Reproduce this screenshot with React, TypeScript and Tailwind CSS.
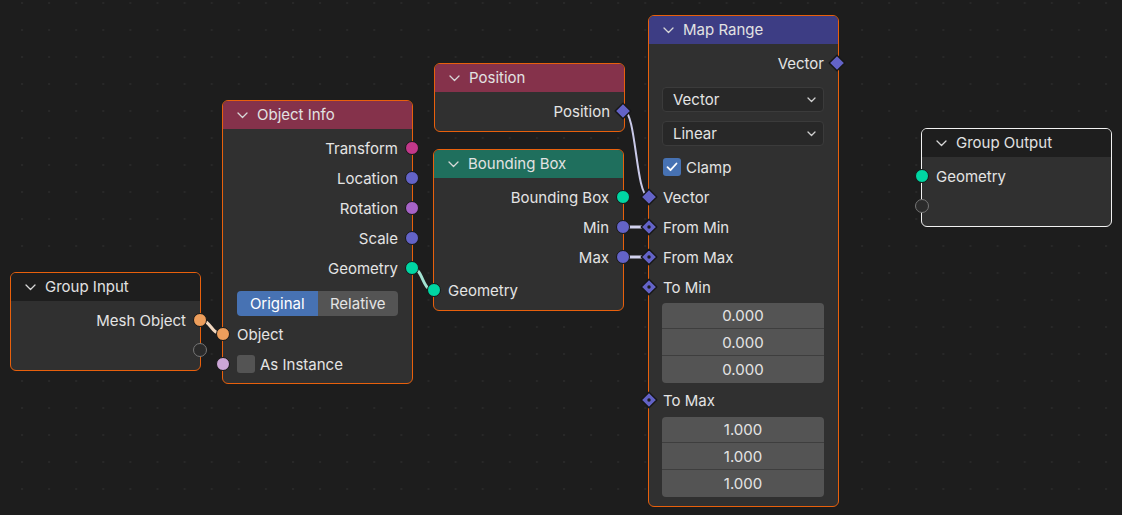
import React from "react";

type Kind = "circle" | "diamond" | "diamondDot" | "hollow";

function Socket({ side, kind, color }: { side: "left" | "right"; kind: Kind; color?: string }) {
  if (kind === "circle") {
    const pos = side === "left" ? "-left-[7.5px]" : "-right-[6.5px]";
    return (
      <span
        className={`absolute top-1/2 -translate-y-1/2 ${pos} w-[14px] h-[14px] rounded-full border-[1.5px] border-[#171717] ${color}`}
      />
    );
  }
  if (kind === "hollow") {
    const pos = side === "left" ? "-left-[7.5px]" : "-right-[6.5px]";
    return (
      <span
        className={`absolute top-1/2 -translate-y-1/2 ${pos} w-[14px] h-[14px] rounded-full border-[1.5px] border-[#767676] bg-[#2b2b2b]`}
      />
    );
  }
  const pos = side === "left" ? "-left-[9px]" : "-right-[8px]";
  return (
    <svg
      width="18"
      height="18"
      viewBox="0 0 18 18"
      className={`absolute top-1/2 -translate-y-1/2 ${pos}`}
    >
      <polygon points="9,1.2 16.8,9 9,16.8 1.2,9" fill="#6363c7" stroke="#171717" strokeWidth="1.4" strokeLinejoin="round" />
      {kind === "diamondDot" && <circle cx="9" cy="9" r="1.7" fill="#1c1c1c" />}
    </svg>
  );
}

function OutRow({ label, kind, color }: { label: string; kind: Kind; color?: string }) {
  return (
    <div className="relative h-[30px] flex items-center justify-end pr-[14px]">
      <span>{label}</span>
      <Socket side="right" kind={kind} color={color} />
    </div>
  );
}

function InRow({ label, kind, color, cls = "" }: { label?: string; kind: Kind; color?: string; cls?: string }) {
  return (
    <div className={`relative h-[30px] flex items-center pl-[14px] ${cls}`}>
      {label && <span>{label}</span>}
      <Socket side="left" kind={kind} color={color} />
    </div>
  );
}

function Chevron() {
  return (
    <svg width="11" height="7" viewBox="0 0 11 7" className="shrink-0">
      <path d="M1 1 L5.5 5.5 L10 1" fill="none" stroke="#d8d8d8" strokeWidth="1.3" strokeLinecap="round" strokeLinejoin="round" />
    </svg>
  );
}

function SmallChevron() {
  return (
    <svg width="9" height="6" viewBox="0 0 9 6" className="shrink-0">
      <path d="M1 1 L4.5 4.5 L8 1" fill="none" stroke="#d0d0d0" strokeWidth="1.3" strokeLinecap="round" strokeLinejoin="round" />
    </svg>
  );
}

function Node({
  pos,
  header,
  border,
  title,
  children,
}: {
  pos: string;
  header: string;
  border: string;
  title: string;
  children: React.ReactNode;
}) {
  return (
    <div className={`absolute ${pos} w-[191px] rounded-[6px] border ${border} bg-[#303030]`}>
      <div className={`h-[28px] rounded-t-[5px] ${header} flex items-center pl-[14px] gap-[9px]`}>
        <Chevron />
        <span className="text-[#e2e2e2] -mt-[1px]">{title}</span>
      </div>
      {children}
    </div>
  );
}

function Dropdown({ label, cls = "" }: { label: string; cls?: string }) {
  return (
    <div className={`h-[25px] ml-[13px] mr-[14px] rounded-[4px] bg-[#282828] border border-[#3b3b3b] flex items-center justify-between pl-[10px] pr-[7px] ${cls}`}>
      <span>{label}</span>
      <SmallChevron />
    </div>
  );
}

function Fields({ value, cls = "" }: { value: string; cls?: string }) {
  return (
    <div className={`ml-[13px] mr-[14px] rounded-[4px] overflow-hidden flex flex-col bg-[#545454] divide-y divide-[#3e3e3e] ${cls}`}>
      <div className="h-[26px] flex items-center justify-center text-[#e4e4e4]">{value}</div>
      <div className="h-[27px] flex items-center justify-center text-[#e4e4e4]">{value}</div>
      <div className="h-[27px] flex items-center justify-center text-[#e4e4e4]">{value}</div>
    </div>
  );
}

function Grid() {
  return (
    <svg className="absolute inset-0" width="1122" height="515">
      <defs>
        <pattern id="dots" x="21" y="2" width="27.1" height="27" patternUnits="userSpaceOnUse">
          <rect x="0" y="0" width="2" height="2" fill="#282828" />
        </pattern>
      </defs>
      <rect width="1122" height="515" fill="url(#dots)" />
    </svg>
  );
}

function Links() {
  return (
    <svg className="absolute inset-0 pointer-events-none" width="1122" height="515">
      <path d="M200 320 C 211 320 211 334 222 334" fill="none" stroke="#f2d7bf" strokeWidth="3" />
      <path d="M412 268 C 423 268 422 290 433 290" fill="none" stroke="#a3e3d2" strokeWidth="3" />
      <path d="M624 111 C 636 111 636 196 648 196" fill="none" stroke="#c9c9e8" strokeWidth="2" />
      <path d="M623 227 L 648 227" fill="none" stroke="#d2d2ee" strokeWidth="3" />
      <path d="M623 257 L 648 257" fill="none" stroke="#d2d2ee" strokeWidth="3" />
    </svg>
  );
}

const ORANGE = "border-[#e8600c]";

export default function App() {
  return (
    <div className="relative w-[1122px] h-[515px] overflow-hidden bg-[#1d1d1d] font-['Inter','Noto_Sans',sans-serif] text-[15px] text-[#e4e4e4] leading-none">
      <Grid />
      <Links />

      {/* Group Input */}
      <Node pos="left-[10px] top-[272px]" header="bg-[#1e1e1e]" border={ORANGE} title="Group Input">
        <div className="pt-[4px] pb-[5px]">
          <OutRow label="Mesh Object" kind="circle" color="bg-[#ed9e5c]" />
          <div className="relative h-[30px]">
            <Socket side="right" kind="hollow" />
          </div>
        </div>
      </Node>

      {/* Object Info */}
      <Node pos="left-[222px] top-[100px]" header="bg-[#85324b]" border={ORANGE} title="Object Info">
        <div className="pt-[4px] pb-[4px]">
          <OutRow label="Transform" kind="circle" color="bg-[#c2388a]" />
          <OutRow label="Location" kind="circle" color="bg-[#6363c7]" />
          <OutRow label="Rotation" kind="circle" color="bg-[#a663c7]" />
          <OutRow label="Scale" kind="circle" color="bg-[#6363c7]" />
          <OutRow label="Geometry" kind="circle" color="bg-[#00d6a3]" />
          <div className="mt-[8px] px-[14px] h-[25px] flex rounded-[4px]">
            <div className="flex-1 rounded-l-[4px] bg-[#4772b3] flex items-center justify-center text-white">Original</div>
            <div className="flex-1 rounded-r-[4px] bg-[#545454] flex items-center justify-center text-[#e4e4e4]">Relative</div>
          </div>
          <InRow label="Object" kind="circle" color="bg-[#ed9e5c]" cls="mt-[3px]" />
          <div className="relative h-[30px] flex items-center pl-[14px] gap-[5px]">
            <span className="w-[18px] h-[18px] rounded-[3px] bg-[#545454]" />
            <span>As Instance</span>
            <Socket side="left" kind="circle" color="bg-[#cca6d6]" />
          </div>
        </div>
      </Node>

      {/* Position */}
      <Node pos="left-[434px] top-[63px]" header="bg-[#85324b]" border={ORANGE} title="Position">
        <div className="pt-[4px] pb-[5px]">
          <OutRow label="Position" kind="diamond" />
        </div>
      </Node>

      {/* Bounding Box */}
      <Node pos="left-[433px] top-[149px]" header="bg-[#1f6f5d]" border={ORANGE} title="Bounding Box">
        <div className="pt-[4px] pb-[5px]">
          <OutRow label="Bounding Box" kind="circle" color="bg-[#00d6a3]" />
          <OutRow label="Min" kind="circle" color="bg-[#6363c7]" />
          <OutRow label="Max" kind="circle" color="bg-[#6363c7]" />
          <InRow label="Geometry" kind="circle" color="bg-[#00d6a3]" cls="mt-[3px]" />
        </div>
      </Node>

      {/* Map Range */}
      <Node pos="left-[648px] top-[15px]" header="bg-[#3d3d84]" border={ORANGE} title="Map Range">
        <div className="pt-[4px] pb-[9px]">
          <OutRow label="Vector" kind="diamond" />
          <Dropdown label="Vector" cls="mt-[9px]" />
          <Dropdown label="Linear" cls="mt-[9px]" />
          <div className="mt-[6px] h-[30px] flex items-center pl-[14px] gap-[5px]">
            <span className="w-[18px] h-[18px] rounded-[3px] bg-[#4772b3] flex items-center justify-center">
              <svg width="12" height="10" viewBox="0 0 12 10">
                <path d="M1.5 5.2 L4.5 8.2 L10.5 1.5" fill="none" stroke="#ffffff" strokeWidth="1.8" strokeLinecap="round" strokeLinejoin="round" />
              </svg>
            </span>
            <span>Clamp</span>
          </div>
          <InRow label="Vector" kind="diamond" />
          <InRow label="From Min" kind="diamondDot" />
          <InRow label="From Max" kind="diamondDot" />
          <InRow label="To Min" kind="diamondDot" />
          <Fields value="0.000" cls="mt-[1px]" />
          <InRow label="To Max" kind="diamondDot" cls="mt-[2px]" />
          <Fields value="1.000" cls="mt-[2px]" />
        </div>
      </Node>

      {/* Group Output */}
      <Node pos="left-[921px] top-[128px]" header="bg-[#1e1e1e]" border="border-[#f2f2f2]" title="Group Output">
        <div className="pt-[4px] pb-[5px]">
          <InRow label="Geometry" kind="circle" color="bg-[#00d6a3]" />
          <div className="relative h-[30px]">
            <Socket side="left" kind="hollow" />
          </div>
        </div>
      </Node>
    </div>
  );
}
